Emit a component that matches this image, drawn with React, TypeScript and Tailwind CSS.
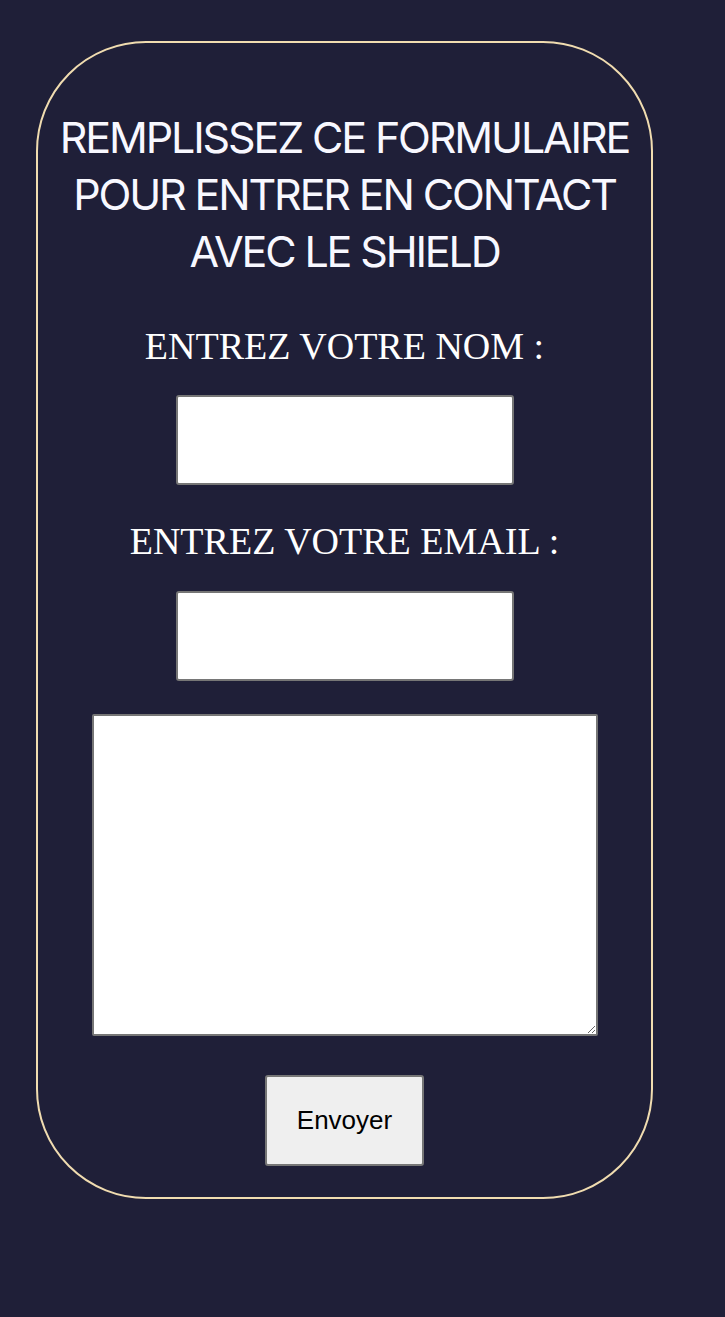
import React from 'react';

const App: React.FC = () => {
  return (
    <div className="min-h-[1317px] w-full bg-[#1f1f38] pt-[41px] pl-[36px]">
      <form
        className="flex h-[1158px] w-[617px] flex-col items-center rounded-[110px] border-2 border-[#f0dcb0] pt-[66px]"
        onSubmit={(e) => e.preventDefault()}
      >
        {/* Title */}
        <h1 className="w-[590px] text-center font-['Inter',sans-serif] text-[43px] font-normal leading-[57px] tracking-[-0.05em] text-[#f8f8ff]">
          REMPLISSEZ CE FORMULAIRE POUR ENTRER EN CONTACT AVEC LE SHIELD
        </h1>

        <label className="mt-[42px] font-['Liberation_Serif',serif] text-[38px] leading-[48px] text-white">
          ENTREZ VOTRE NOM :
        </label>
        <input
          type="text"
          className="mt-[25px] h-[90px] w-[338px] rounded-[3px] border-2 border-[#767676] bg-white"
        />

        <label className="mt-[32px] font-['Liberation_Serif',serif] text-[38px] leading-[48px] text-white">
          ENTREZ VOTRE EMAIL :
        </label>
        <input
          type="email"
          className="mt-[26px] h-[90px] w-[338px] rounded-[3px] border-2 border-[#767676] bg-white"
        />

        <textarea className="mt-[33px] h-[322px] w-[506px] rounded-[2px] border-2 border-[#767676] bg-white" />

        <button
          type="submit"
          className="mt-[39px] h-[91px] w-[159px] rounded-[3px] border-2 border-[#767676] bg-[#efefef] font-['Liberation_Sans',sans-serif] text-[26px] text-black"
        >
          Envoyer
        </button>
      </form>
    </div>
  );
};

export default App;
